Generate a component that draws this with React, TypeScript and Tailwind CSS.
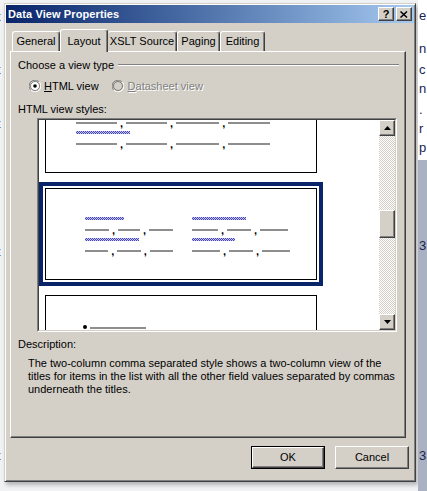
import React from 'react';

const raised =
  'border border-t-white border-l-white border-r-[#404040] border-b-[#404040] shadow-[inset_-1px_-1px_0_#808080]';

const Dots = ({ w }: { w: number }) => (
  <div className="h-[2px] bg-[#8e8e8e]" style={{ width: w }} />
);

const Title = ({ w }: { w: number }) => (
  <div
    className="h-[3px] bg-[repeating-conic-gradient(#4646b8_0_25%,#c4c4ee_0_50%)] bg-[length:2px_2px]"
    style={{ width: w }}
  />
);

const Comma = () => (
  <span className="mx-[3px] text-[11px] leading-[2px] font-bold text-black">,</span>
);

// a row of field values, separated by commas
const Fields = ({ parts }: { parts: number[] }) => (
  <div className="flex items-end h-[4px]">
    {parts.map((w, i) => (
      <React.Fragment key={i}>
        {i > 0 && <Comma />}
        <Dots w={w} />
      </React.Fragment>
    ))}
  </div>
);

const StyleItem = ({ selected, children }: { selected?: boolean; children: React.ReactNode }) => (
  <div
    className={
      'w-[284px] mb-[3px] p-[2px] border-4 ' +
      (selected ? 'border-[#0a246a]' : 'border-transparent')
    }
  >
    <div className="h-[92px] border border-black bg-white">{children}</div>
  </div>
);

const Radio = ({ checked, disabled }: { checked?: boolean; disabled?: boolean }) => (
  <svg width="12" height="12" viewBox="0 0 12 12">
    <path d="M10.2 1.8A6 6 0 0 0 0 6a6 6 0 0 0 1.8 4.2" fill="none" stroke="#808080" strokeWidth="1" />
    <path d="M1.8 10.2A6 6 0 0 0 12 6a6 6 0 0 0-1.8-4.2" fill="none" stroke="#ffffff" strokeWidth="1" />
    <circle cx="6" cy="6" r="4.5" fill={disabled ? '#d4d0c8' : '#ffffff'} stroke="#404040" strokeWidth="0.6" />
    {checked && <circle cx="6" cy="6" r="1.8" fill="#000" />}
  </svg>
);

const App = () => {
  return (
    <div className="w-[427px] h-[491px] flex overflow-hidden bg-[#f1f2f4] font-['Liberation_Sans',Arial,sans-serif] text-[11px] text-black">
      {/* left edge of the page behind */}
      <div className="w-[4px] flex flex-col text-[13px] leading-[13px] text-[#333] overflow-hidden">
        <div className="h-[10px]" />
        <span className="-ml-[3px]">t</span>
        <div className="h-[40px]" />
        <span className="-ml-[3px]">t</span>
        <div className="h-[41px]" />
        <span className="-ml-[3px]">t</span>
        <div className="h-[115px]" />
        <span className="-ml-[3px]">t</span>
        <div className="h-[191px]" />
        <span className="-ml-[3px]">t</span>
      </div>

      {/* dialog */}
      <div className="w-[412px] h-[479px] mt-[3px] flex flex-col bg-[#d4d0c8] border border-t-[#d4d0c8] border-l-[#d4d0c8] border-r-[#404040] border-b-[#404040] shadow-[inset_1px_1px_0_#fff,inset_-1px_-1px_0_#808080,2px_3px_4px_rgba(0,0,0,0.25)]">
        <div className="mx-[1px] mt-[1px] h-[18px] flex items-center pl-[2px] pr-[2px] bg-linear-to-r from-[#0a246a] to-[#a6caf0]">
          <span className="text-white font-bold text-[11px] tracking-[0.1px]">Data View Properties</span>
          <div className="ml-auto flex">
            <div className={'w-[16px] h-[14px] bg-[#d4d0c8] flex items-center justify-center ' + raised}>
              <span className="font-bold text-[11px] leading-none">?</span>
            </div>
            <div className={'ml-[2px] w-[16px] h-[14px] bg-[#d4d0c8] flex items-center justify-center ' + raised}>
              <svg width="8" height="7" viewBox="0 0 8 7">
                <path d="M0.5 0.5L7 6.5M7 0.5L0.5 6.5" stroke="#000" strokeWidth="1.5" />
              </svg>
            </div>
          </div>
        </div>

        <div className="flex-1 flex flex-col px-[5px]">
          {/* tabs */}
          <div className="mt-[6px] h-[22px] flex items-end relative z-10">
            <div className="w-[2px]" />
            <div className="w-[48px] h-[20px] border-t border-l border-t-white border-l-white border-r border-r-[#404040] shadow-[inset_-1px_0_0_#808080] rounded-t-[3px] flex items-center justify-center">
              General
            </div>
            <div className="w-[48px] h-[23px] -mb-[1px] bg-[#d4d0c8] border-t border-l border-t-white border-l-white border-r border-r-[#404040] shadow-[inset_-1px_0_0_#808080] rounded-t-[3px] flex items-start pt-[3px] justify-center">
              Layout
            </div>
            <div className="w-[69px] h-[20px] border-t border-t-white border-r border-r-[#404040] shadow-[inset_-1px_0_0_#808080] rounded-t-[3px] flex items-center justify-center">
              XSLT Source
            </div>
            <div className="w-[43px] h-[20px] border-t border-l border-t-white border-l-white border-r border-r-[#404040] shadow-[inset_-1px_0_0_#808080] rounded-t-[3px] flex items-center justify-center">
              Paging
            </div>
            <div className="w-[45px] h-[20px] border-t border-l border-t-white border-l-white border-r border-r-[#404040] shadow-[inset_-1px_0_0_#808080] rounded-t-[3px] flex items-center justify-center">
              Editing
            </div>
          </div>

          {/* tab panel */}
          <div className={'w-[396px] h-[387px] flex flex-col pl-[7px] ' + raised}>
            <div className="mt-[6px] h-[14px] flex items-center">
              <span>Choose a view type</span>
              <div className="ml-[4px] w-[281px] h-[2px] border-t border-t-[#808080] border-b border-b-white" />
            </div>

            <div className="mt-[7px] h-[14px] flex items-center pl-[11px]">
              <Radio checked />
              <span className="ml-[3px]">
                <span className="underline underline-offset-1">H</span>TML view
              </span>
              <div className="ml-[13px]">
                <Radio disabled />
              </div>
              <span className="ml-[4px] text-[#808080] [text-shadow:1px_1px_0_#fff]">
                <span className="underline underline-offset-1">D</span>atasheet view
              </span>
            </div>

            <div className="mt-[9px] h-[14px] flex items-center">HTML view styles:</div>

            {/* style list */}
            <div className="mt-[2px] ml-[19px] w-[360px] h-[214px] flex border-2 border-t-[#808080] border-l-[#808080] border-r-white border-b-white">
              <div className="flex-1 flex border border-t-[#404040] border-l-[#404040] border-r-[#d4d0c8] border-b-[#d4d0c8] -m-[1px]">
                <div className="flex-1 bg-white overflow-hidden">
                  <div className="-mt-[45px] flex flex-col">
                    <StyleItem>
                      <div className="pl-[30px] pt-[28px] flex flex-col gap-[7px]">
                        <Title w={54} />
                        <Fields parts={[41, 41, 43, 42]} />
                        <Title w={54} />
                        <Fields parts={[41, 41, 43, 42]} />
                      </div>
                    </StyleItem>
                    <StyleItem selected>
                      <div className="pl-[39px] pt-[28px] flex gap-[19px]">
                        <div className="w-[88px] flex flex-col gap-[7px]">
                          <Title w={39} />
                          <Fields parts={[26, 24, 26]} />
                          <Title w={54} />
                          <Fields parts={[25, 25, 25]} />
                        </div>
                        <div className="flex flex-col gap-[7px]">
                          <Title w={54} />
                          <Fields parts={[26, 24, 28]} />
                          <Title w={43} />
                          <Fields parts={[28, 24, 28]} />
                        </div>
                      </div>
                    </StyleItem>
                    <StyleItem>
                      <div className="pl-[37px] pt-[29px] flex items-center">
                        <div className="w-[4px] h-[4px] rounded-full bg-black" />
                        <div className="ml-[3px] mt-[2px]">
                          <Dots w={56} />
                        </div>
                      </div>
                    </StyleItem>
                  </div>
                </div>

                {/* scrollbar */}
                <div className="w-[16px] flex flex-col bg-[repeating-conic-gradient(#d4d0c8_0_25%,#ffffff_0_50%)] bg-[length:2px_2px]">
                  <div className={'h-[16px] bg-[#d4d0c8] flex items-center justify-center ' + raised}>
                    <svg width="7" height="4" viewBox="0 0 7 4">
                      <path d="M3.5 0L7 4H0z" fill="#000" />
                    </svg>
                  </div>
                  <div className="h-[74px]" />
                  <div className={'h-[28px] bg-[#d4d0c8] ' + raised} />
                  <div className="flex-1" />
                  <div className={'h-[16px] bg-[#d4d0c8] flex items-center justify-center ' + raised}>
                    <svg width="7" height="4" viewBox="0 0 7 4">
                      <path d="M0 0H7L3.5 4z" fill="#000" />
                    </svg>
                  </div>
                </div>
              </div>
            </div>

            <div className="mt-[5px] h-[14px] flex items-center">Description:</div>
            <p className="mt-[6px] ml-[10px] w-[374px] leading-[13px]">
              The two-column comma separated style shows a two-column view of the titles for items in the list
              with all the other field values separated by commas underneath the titles.
            </p>
          </div>

          {/* buttons */}
          <div className="mt-[8px] flex justify-end gap-[10px] pr-[1px]">
            <div className="w-[74px] h-[23px] border border-black">
              <div className={'w-full h-full flex items-center justify-center ' + raised}>OK</div>
            </div>
            <div className={'w-[74px] h-[23px] flex items-center justify-center ' + raised}>Cancel</div>
          </div>
        </div>
      </div>

      {/* right edge of the page behind */}
      <div className="ml-[2px] flex-1 flex flex-col text-[13px] leading-[13px] text-[#1a2450] overflow-hidden">
        <div className="h-[160px] bg-white flex flex-col pl-[1px]">
          <div className="h-[9px]" />
          <span>e</span>
          <div className="h-[20px]" />
          <span>n</span>
          <div className="h-[8px]" />
          <span>c</span>
          <div className="h-[6px]" />
          <span>n</span>
          <div className="h-[8px]" />
          <span>.</span>
          <div className="h-[6px]" />
          <span>r</span>
          <div className="h-[6px]" />
          <span>p</span>
        </div>
        <div className="flex-1 bg-[#aab1c2] flex flex-col pl-[1px]">
          <div className="h-[79px]" />
          <span>3</span>
          <div className="h-[197px]" />
          <span>3</span>
        </div>
      </div>
    </div>
  );
};

export default App;
